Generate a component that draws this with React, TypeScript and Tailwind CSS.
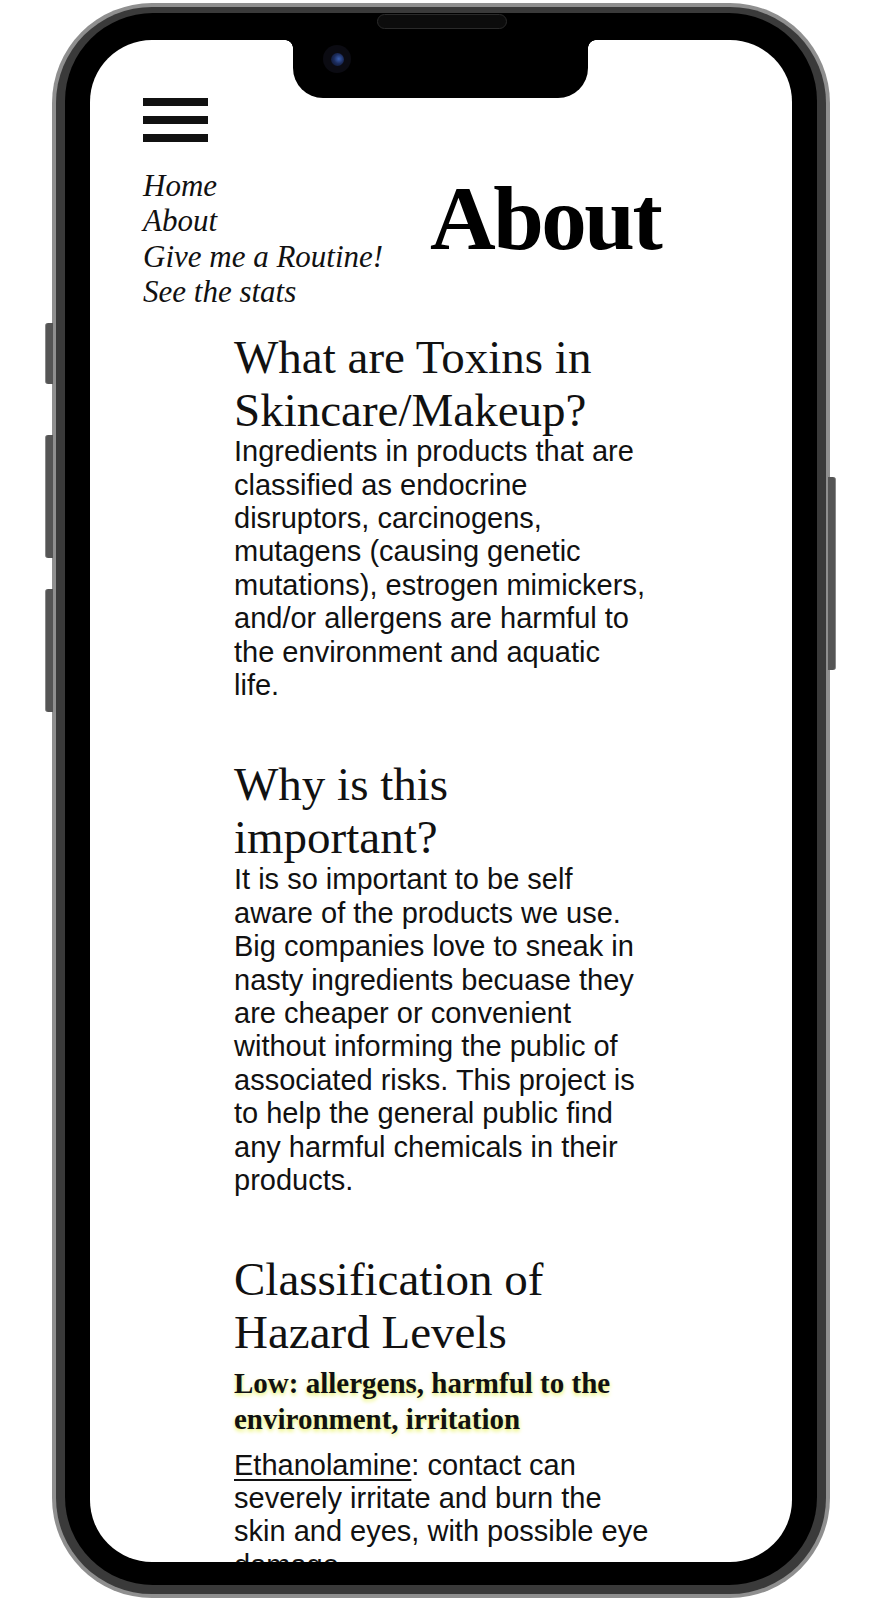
import React from "react";

const serif = "font-['Liberation_Serif',_'Times_New_Roman',_serif]";
const sans = "font-['Liberation_Sans',_Arial,_sans-serif]";

function Heading({ children }: { children: React.ReactNode }) {
  return (
    <h2 className={`${serif} text-[47px] leading-[53px] font-normal text-[#111]`}>{children}</h2>
  );
}

function Body({ children, className = "" }: { children: React.ReactNode; className?: string }) {
  return (
    <p className={`${sans} text-[29px] leading-[33.4px] text-[#111] ${className}`}>{children}</p>
  );
}

export default function App() {
  return (
    <div className="min-h-screen w-full bg-white flex items-start pl-[52px] pt-[3px]">
      <div className="relative w-[778px] h-[1595px] rounded-[100px] bg-[#8f8f8f] p-[4px]">
        {/* side buttons */}
        <div className="absolute left-[-7px] top-[320px] w-[8px] h-[61px] rounded-l-[3px] bg-[#555] border-l border-[#888]" />
        <div className="absolute left-[-7px] top-[432px] w-[8px] h-[123px] rounded-l-[3px] bg-[#555] border-l border-[#888]" />
        <div className="absolute left-[-7px] top-[586px] w-[8px] h-[123px] rounded-l-[3px] bg-[#555] border-l border-[#888]" />
        <div className="absolute right-[-6px] top-[474px] w-[8px] h-[193px] rounded-r-[3px] bg-[#555] border-r border-[#888]" />

        <div className="h-full w-full rounded-[96px] bg-[#3a3a3a] px-[9px] pt-[6px] pb-[9px]">
          <div className="relative h-full w-full rounded-[88px] bg-black px-[25px] pt-[27px] pb-[23px]">
            {/* speaker */}
            <div className="absolute left-[312px] top-[1px] w-[130px] h-[15px] rounded-full bg-[#0c0c0c] border border-[#2a2a2a]" />

            <div className="relative h-full w-full overflow-hidden rounded-[62px] bg-white">
              {/* notch */}
              <div className="absolute left-[203px] top-0 w-[295px] h-[58px] rounded-b-[30px] bg-black">
                <div className="absolute left-[-8px] top-0 w-[8px] h-[8px] bg-[radial-gradient(circle_at_0_100%,transparent_7.5px,black_8px)]" />
                <div className="absolute right-[-8px] top-0 w-[8px] h-[8px] bg-[radial-gradient(circle_at_100%_100%,transparent_7.5px,black_8px)]" />
                <div className="absolute left-[30px] top-[5px] w-[28px] h-[28px] rounded-full bg-[#0b0b12] flex items-center justify-center">
                  <div className="w-[13px] h-[13px] rounded-full bg-[radial-gradient(circle_at_60%_45%,#3a5fb0_0,#1c2c5c_45%,#0a0f22_100%)]" />
                </div>
              </div>

              {/* content */}
              <div className="pl-[53px] pt-[58px]">
                <div className="flex flex-col gap-[10px] w-[65px]">
                  <div className="h-[8px] bg-[#111]" />
                  <div className="h-[8px] bg-[#111]" />
                  <div className="h-[8px] bg-[#111]" />
                </div>

                <div className="mt-[26px] flex items-start">
                  <nav className={`${serif} italic text-[31px] leading-[35.3px] text-[#111] w-[250px] shrink-0 flex flex-col`}>
                    <span>Home</span>
                    <span>About</span>
                    <span>Give me a Routine!</span>
                    <span>See the stats</span>
                  </nav>
                  <h1 className={`${serif} font-bold text-[91px] leading-none tracking-[-2.5px] text-black ml-[37px] mt-[5px]`}>
                    About
                  </h1>
                </div>

                <div className="ml-[91px] w-[416px]">
                  <section className="mt-[22px]">
                    <Heading>
                      What are Toxins in
                      <br />
                      Skincare/Makeup?
                    </Heading>
                    <Body className="-mt-[2px]">
                      Ingredients in products that are classified as endocrine disruptors, carcinogens, mutagens
                      (causing genetic mutations), estrogen mimickers, and/or allergens are harmful to the
                      environment and aquatic life.
                    </Body>
                  </section>

                  <section className="mt-[56px]">
                    <Heading>Why is this important?</Heading>
                    <Body className="-mt-[1px]">
                      It is so important to be self aware of the products we use. Big companies love to sneak in
                      nasty ingredients becuase they are cheaper or convenient without informing the public of
                      associated risks. This project is to help the general public find any harmful chemicals in
                      their products.
                    </Body>
                  </section>

                  <section className="mt-[55px]">
                    <Heading>Classification of Hazard Levels</Heading>
                    <p
                      className={`${serif} font-bold text-[29px] leading-[36px] text-[#111] mt-[6px] [text-shadow:0_2px_4px_#e8f25a]`}
                    >
                      Low: allergens, harmful to the environment, irritation
                    </p>
                    <Body className="mt-[12px]">
                      <span className="underline decoration-[2px] underline-offset-[4px]">Ethanolamine</span>: contact
                      can severely irritate and burn the skin and eyes, with possible eye damage.
                    </Body>
                  </section>
                </div>
              </div>
            </div>
          </div>
        </div>
      </div>
    </div>
  );
}
